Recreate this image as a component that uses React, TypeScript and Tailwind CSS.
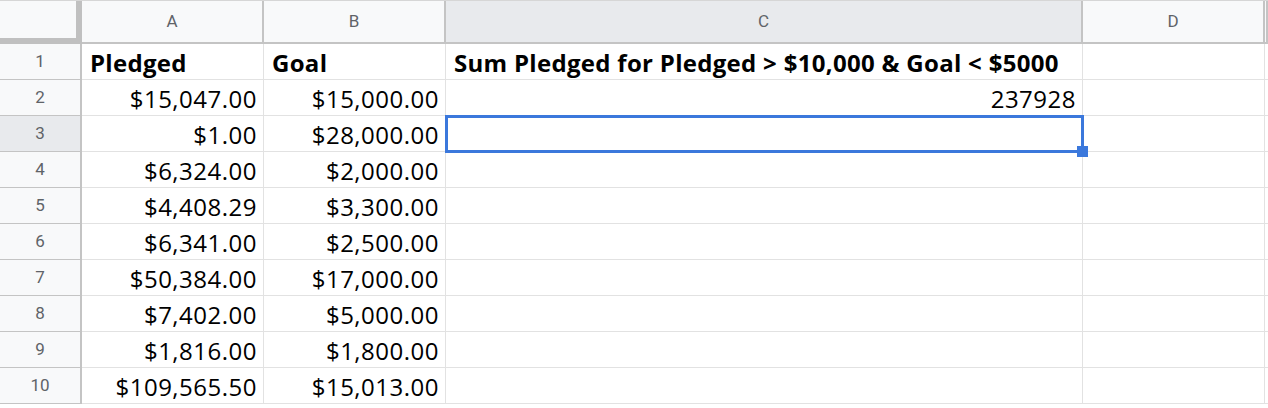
import React from 'react'

const rows: [string, string, string][] = [
  ['Pledged', 'Goal', 'Sum Pledged for Pledged > $10,000 & Goal < $5000'],
  ['$15,047.00', '$15,000.00', '237928'],
  ['$1.00', '$28,000.00', ''],
  ['$6,324.00', '$2,000.00', ''],
  ['$4,408.29', '$3,300.00', ''],
  ['$6,341.00', '$2,500.00', ''],
  ['$50,384.00', '$17,000.00', ''],
  ['$7,402.00', '$5,000.00', ''],
  ['$1,816.00', '$1,800.00', ''],
  ['$109,565.50', '$15,013.00', ''],
]

const headerFont = { fontFamily: 'Roboto, "Liberation Sans", sans-serif' }
const cellFont = { fontFamily: '"Open Sans", Lato, sans-serif' }

export default function App() {
  return (
    <div className="relative h-[408px] w-[1268px] overflow-hidden bg-white">
      <div className="grid grid-cols-[82px_182px_182px_637px_182px_1fr] border-t border-[#d6d6d6]">
        {/* column headers */}
        <div className="h-[43px] border-b-[6px] border-r-[6px] border-[#c0c0c0] bg-[#f8f9fa]" />
        {['A', 'B', 'C', 'D', ''].map((l) => (
          <div
            key={l || 'e'}
            style={headerFont}
            className={`flex h-[43px] items-center justify-center border-b-2 border-r-2 border-[#c4c4c4] text-[17px] text-[#5f6368] ${
              l === 'C' ? 'bg-[#e8eaed]' : 'bg-[#f8f9fa]'
            }`}
          >
            {l}
          </div>
        ))}

        {/* rows */}
        {rows.map((r, i) => {
          const n = i + 1
          const bold = n === 1
          return (
            <React.Fragment key={n}>
              <div
                style={headerFont}
                className={`flex h-[36px] items-center justify-center border-b border-r-2 border-[#c4c4c4] text-[17px] text-[#5f6368] ${
                  n === 3 ? 'bg-[#e8eaed]' : 'bg-[#f8f9fa]'
                }`}
              >
                {n}
              </div>
              {r.map((v, j) => (
                <div
                  key={j}
                  style={cellFont}
                  className={`flex h-[36px] items-center whitespace-nowrap border-b border-r border-[#e2e2e2] pt-[2px] text-[24px] leading-none text-black ${
                    bold
                      ? 'justify-start pl-[8px] font-bold tracking-[0.3px]'
                      : 'justify-end pr-[6px] tracking-[0.5px]'
                  }`}
                >
                  {v}
                </div>
              ))}
              <div className="h-[36px] border-b border-r border-[#e2e2e2]" />
              <div className="h-[36px] border-b border-[#e2e2e2]" />
            </React.Fragment>
          )
        })}
      </div>

      {/* selection on C3 */}
      <div className="absolute left-[445px] top-[115px] h-[38px] w-[639px] border-[3px] border-[#3b78dc]" />
      <div className="absolute left-[1077px] top-[146px] h-[11px] w-[11px] bg-[#3b78dc]" />
    </div>
  )
}
